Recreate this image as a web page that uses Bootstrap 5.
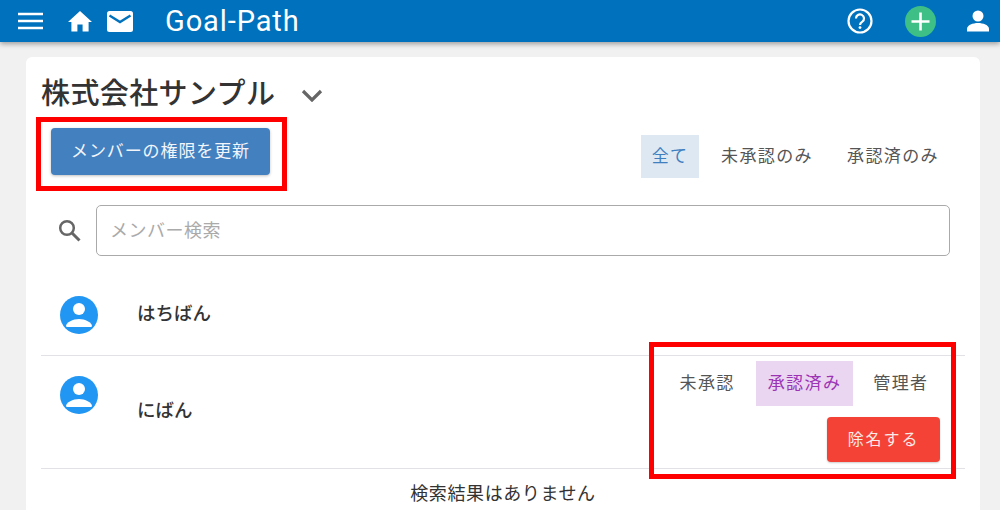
<!DOCTYPE html>
<html lang="ja">
<head>
<meta charset="utf-8">
<title>Goal-Path</title>
<link href="https://cdn.jsdelivr.net/npm/bootstrap@5.3.0/dist/css/bootstrap.min.css" rel="stylesheet">
<style>
html,body{height:510px;overflow:hidden}
body{background:#f1f1f1;font-family:Roboto,"Noto Sans CJK JP",sans-serif;color:#333;position:relative}
.topbar{height:42px;background:#0071bc;box-shadow:0 2px 5px rgba(0,0,0,.35);padding:0 11px 0 18px}
.brand{font-size:29px;color:#fff;letter-spacing:.9px;margin-left:32px;line-height:1}
.ic-home{margin-left:25px}
.ic-mail{margin-left:15px}
.ic-plus{margin-left:32px}
.ic-user{margin-left:31px}
.sheet{margin:15px 20px 0 26px;background:#fff;border-radius:6px 6px 0 0;height:453px;padding:15px 15px 0 15px}
.co-name{font-size:29px;font-weight:500;line-height:42px;padding-top:1px;color:#333;letter-spacing:.4px}
.chev{margin-left:26px;margin-top:4px}
.perm-btn{width:219px;height:47px;margin:13px 0 0 10px;background:#4280c0;border:0;border-radius:4px;color:#f2f6fb;font-size:17px;letter-spacing:.9px;padding:0;box-shadow:0 1px 3px rgba(0,0,0,.25)}
.seg{height:43px;font-size:17px;letter-spacing:1.4px;color:#555;border:0;background:none;padding:0 12px;border-radius:0;white-space:nowrap}
.seg-next{margin-left:10px}
.seg-blue{background:#dde8f3;color:#3f7fc0;padding:0 10.5px}
.seg-purple{background:#ead6f0;color:#9c33b5}
.filter-row{margin:20px 14px 0 0}
.search-row{margin:27px 15px 0 17px}
.search-ic{margin-right:15px}
.search-box{height:51px;flex:1;border:1.5px solid #aaa;border-radius:5px;font-size:18px;padding:0 13px;color:#333;letter-spacing:.5px}
.search-box::placeholder{color:#aaa}
.member{border-bottom:1px solid #e2e2e6}
.member-a{height:100px;padding-top:40px}
.member-b{height:113px}
.avatar{width:38px;height:38px;margin-left:19px;flex:none}
.avatar-b{margin-top:20px}
.m-name{font-size:18.5px;font-weight:500;margin-left:39px;color:#333;line-height:28px}
.m-name-a{margin-top:4px}
.m-name-b{margin-top:41px}
.role-col{margin-right:25px;padding-top:5px}
.role{height:45px;padding:0 11.500px;letter-spacing:1.400px}
.role-purple{margin-left:10px}
.role-admin{margin-left:9px}
.kick-btn{width:113px;height:45px;background:#f44336;border:0;border-radius:4px;color:#fbe9e7;font-size:16px;letter-spacing:1.9px;padding:0;margin-top:11px;box-shadow:0 1px 2px rgba(0,0,0,.2)}
.empty-msg{font-size:18px;letter-spacing:.6px;line-height:26px;margin-top:12px}
.redbox{position:absolute;border:5px solid #f00;pointer-events:none}
.rb1{left:36px;top:117px;width:251px;height:74px}
.rb2{left:649px;top:342px;width:307px;height:137px}
</style>
</head>
<body>
<nav class="topbar d-flex align-items-center position-relative">
  <svg width="25" height="18" viewBox="0 0 25 18"><path d="M0 2h25M0 9h25M0 16h25" stroke="#fff" stroke-width="2.6"/></svg>
  <svg class="ic-home" width="24" height="22" viewBox="0 0 24 22"><path d="M12 1 0 12h3.400v9.500h6v-7h5.200v7h6V12H24z" fill="#fff"/></svg>
  <svg class="ic-mail" width="26" height="21" viewBox="0 0 26 21"><rect width="26" height="21" rx="2.500" fill="#fff"/><path d="M2.500 4.500 13 11l10.500-6.500" fill="none" stroke="#0071bc" stroke-width="2.400"/></svg>
  <span class="brand">Goal-Path</span>
  <div class="ms-auto d-flex align-items-center">
    <svg width="26" height="26" viewBox="0 0 26 26"><circle cx="13" cy="13" r="11.500" fill="none" stroke="#fff" stroke-width="2.200"/><path d="M9 10.500a4 4 0 1 1 6.300 3.200c-1.500 1-2.300 1.700-2.300 3.300" fill="none" stroke="#fff" stroke-width="2.200"/><circle cx="13" cy="19.600" r="1.400" fill="#fff"/></svg>
    <svg class="ic-plus" width="31" height="31" viewBox="0 0 31 31"><circle cx="15.500" cy="15.500" r="15.500" fill="#3dbf85"/><path d="M15.500 6.500v18M6.500 15.500h18" stroke="#fff" stroke-width="2.600"/></svg>
    <svg class="ic-user" width="22" height="22" viewBox="0 0 22 22"><circle cx="11" cy="6" r="5.500" fill="#fff"/><path d="M0 21.500v-2.500c0-4 6-6 11-6s11 2 11 6v2.500z" fill="#fff"/></svg>
  </div>
</nav>
<main class="sheet">
  <div class="d-flex align-items-center">
    <span class="co-name">株式会社サンプル</span>
    <svg class="chev" width="22" height="13" viewBox="0 0 22 13"><path d="M2 2l9 9 9-9" fill="none" stroke="#666" stroke-width="3.200"/></svg>
  </div>
  <div class="d-flex justify-content-between align-items-start">
    <button type="button" class="btn perm-btn">メンバーの権限を更新</button>
    <div class="d-flex filter-row">
      <button type="button" class="btn seg seg-blue">全て</button>
      <button type="button" class="btn seg seg-next">未承認のみ</button>
      <button type="button" class="btn seg seg-next">承認済のみ</button>
    </div>
  </div>
  <div class="d-flex align-items-center search-row">
    <svg class="search-ic" width="23" height="23" viewBox="0 0 23 23"><circle cx="9" cy="9" r="6.800" fill="none" stroke="#666" stroke-width="2.500"/><path d="m14 14 7.500 7.500" stroke="#666" stroke-width="3"/></svg>
    <input class="search-box form-control shadow-none" type="text" placeholder="メンバー検索">
  </div>
  <div class="member member-a d-flex align-items-start">
    <svg class="avatar" viewBox="0 0 38 38"><circle cx="19" cy="19" r="19" fill="#2196f3"/><circle cx="19" cy="13" r="6" fill="#fff"/><path d="M6 30c0-3.500 7-7 13-7s13 3.500 13 7a1.500 1.500 0 0 1-1 1H7a1.500 1.500 0 0 1-1-1z" fill="#fff"/></svg>
    <span class="m-name m-name-a">はちばん</span>
  </div>
  <div class="member member-b d-flex align-items-start">
    <svg class="avatar avatar-b" viewBox="0 0 38 38"><circle cx="19" cy="19" r="19" fill="#2196f3"/><circle cx="19" cy="13" r="6" fill="#fff"/><path d="M6 30c0-3.500 7-7 13-7s13 3.500 13 7a1.500 1.500 0 0 1-1 1H7a1.500 1.500 0 0 1-1-1z" fill="#fff"/></svg>
    <span class="m-name m-name-b">にばん</span>
    <div class="ms-auto role-col d-flex flex-column align-items-end">
      <div class="d-flex">
        <button type="button" class="btn seg role">未承認</button>
        <button type="button" class="btn seg role seg-purple role-purple">承認済み</button>
        <button type="button" class="btn seg role role-admin">管理者</button>
      </div>
      <button type="button" class="btn kick-btn">除名する</button>
    </div>
  </div>
  <div class="empty-msg text-center">検索結果はありません</div>
</main>
<div class="redbox rb1"></div>
<div class="redbox rb2"></div>
<script src="https://cdn.jsdelivr.net/npm/bootstrap@5.3.0/dist/js/bootstrap.bundle.min.js"></script>
</body>
</html>
